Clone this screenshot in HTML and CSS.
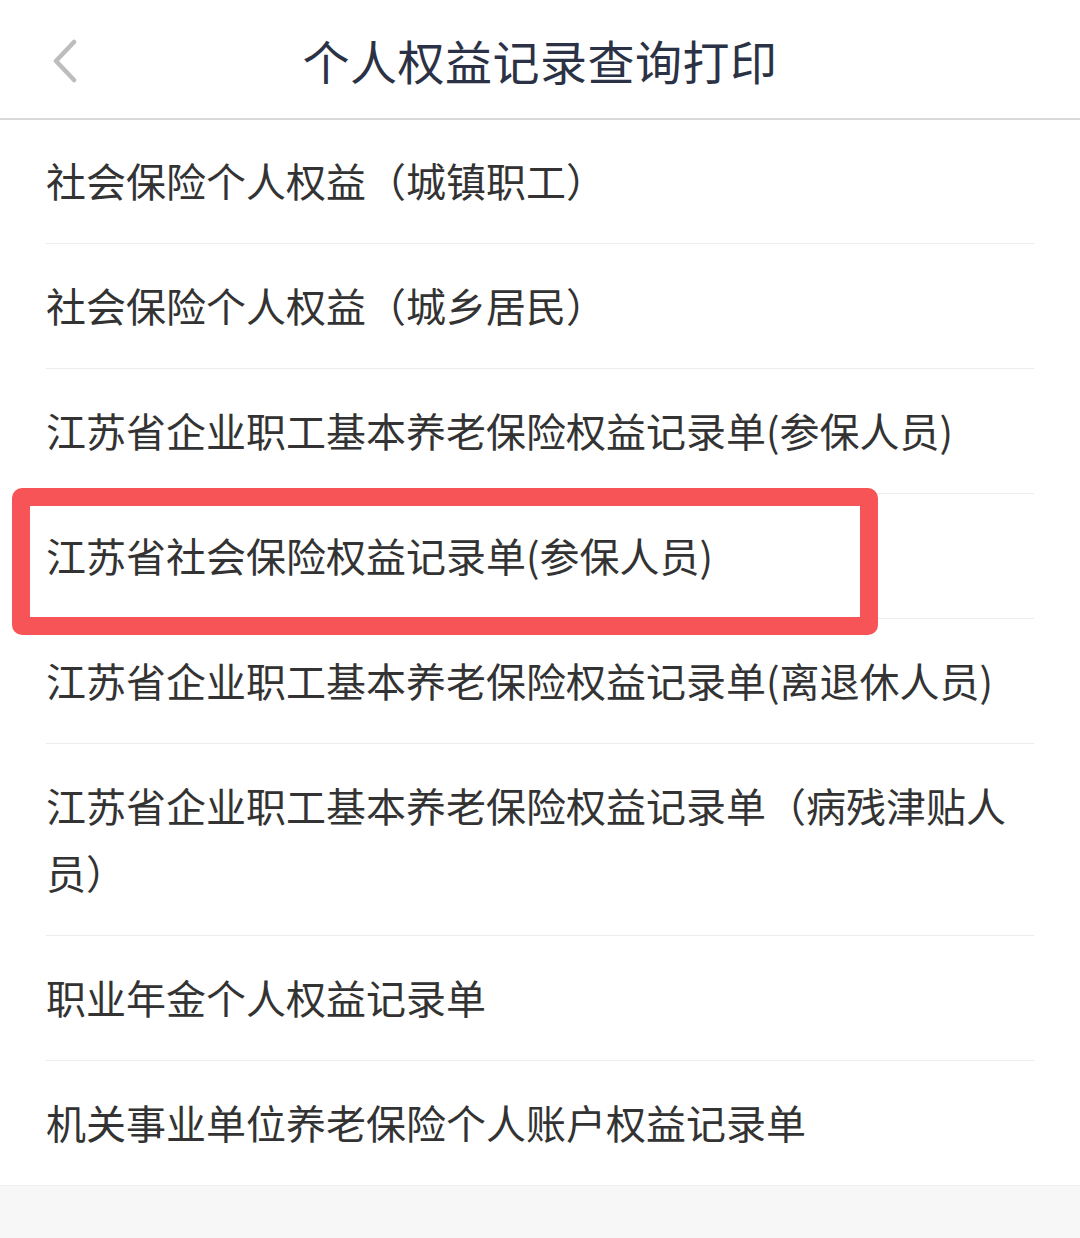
FILE: index.html
```html
<!DOCTYPE html>
<html>

<head>
  <meta charset="UTF-8" />
  <meta name="viewport" content="width=device-width, initial-scale=1.0">
  <title>个人权益记录查询打印</title>
  <link rel="stylesheet" href="styles.css">
</head>

<body>
  <div class="topbar">
    <a class="back" href="#">
      <svg width="30" height="44" viewBox="0 0 30 44">
        <path d="M24 3 L6 22 L24 41" fill="none" stroke="#bdbdbd" stroke-width="4.5" stroke-linecap="round" stroke-linejoin="round" />
      </svg>
    </a>
    <h1>个人权益记录查询打印</h1>
  </div>

  <ul class="record-list">
    <li><a href="#">社会保险个人权益（城镇职工）</a></li>
    <li><a href="#">社会保险个人权益（城乡居民）</a></li>
    <li><a href="#">江苏省企业职工基本养老保险权益记录单(参保人员)</a></li>
    <li class="marked"><a href="#">江苏省社会保险权益记录单(参保人员)</a><span class="mark-box"></span></li>
    <li><a href="#">江苏省企业职工基本养老保险权益记录单(离退休人员)</a></li>
    <li><a href="#">江苏省企业职工基本养老保险权益记录单（病残津贴人员）</a></li>
    <li><a href="#">职业年金个人权益记录单</a></li>
    <li class="last"><a href="#">机关事业单位养老保险个人账户权益记录单</a></li>
  </ul>

  <div class="footer"></div>
</body>

</html>
```

FILE: styles.css
```css
* {
  margin: 0;
  padding: 0;
  box-sizing: border-box;
  font-family: "Noto Sans CJK SC", "Noto Sans", sans-serif;
}

body {
  background-color: #f7f7f7;
  color: #333;
}

a {
  text-decoration: none;
  color: inherit;
}

.topbar {
  position: relative;
  height: 120px;
  background-color: #fff;
  border-bottom: 2px solid #d9d9d9;
  display: flex;
  align-items: center;
  justify-content: center;
}

.topbar .back {
  position: absolute;
  left: 50px;
  top: 39px;
  display: flex;
}

.topbar h1 {
  font-size: 47px;
  font-weight: 400;
  color: #2b3245;
  letter-spacing: 0.5px;
  line-height: 1;
}

.record-list {
  list-style: none;
  padding: 0 46px;
  background-color: #fff;
}

.record-list li {
  position: relative;
  padding: 28px 0 29px;
  border-bottom: 1px solid #ececec;
  font-size: 40px;
  line-height: 67px;
  color: #333;
}

.record-list li:first-child {
  padding-top: 27px;
}

.record-list li.last {
  border-bottom: none;
}

/* red annotation box drawn over the fourth row */
.mark-box {
  position: absolute;
  left: -34px;
  top: -6px;
  width: 866px;
  height: 147px;
  border: 18px solid #f75457;
  border-radius: 10px;
}

.footer {
  height: 54px;
  background-color: #f7f7f7;
  border-top: 1px solid #f0f0f0;
}
```
